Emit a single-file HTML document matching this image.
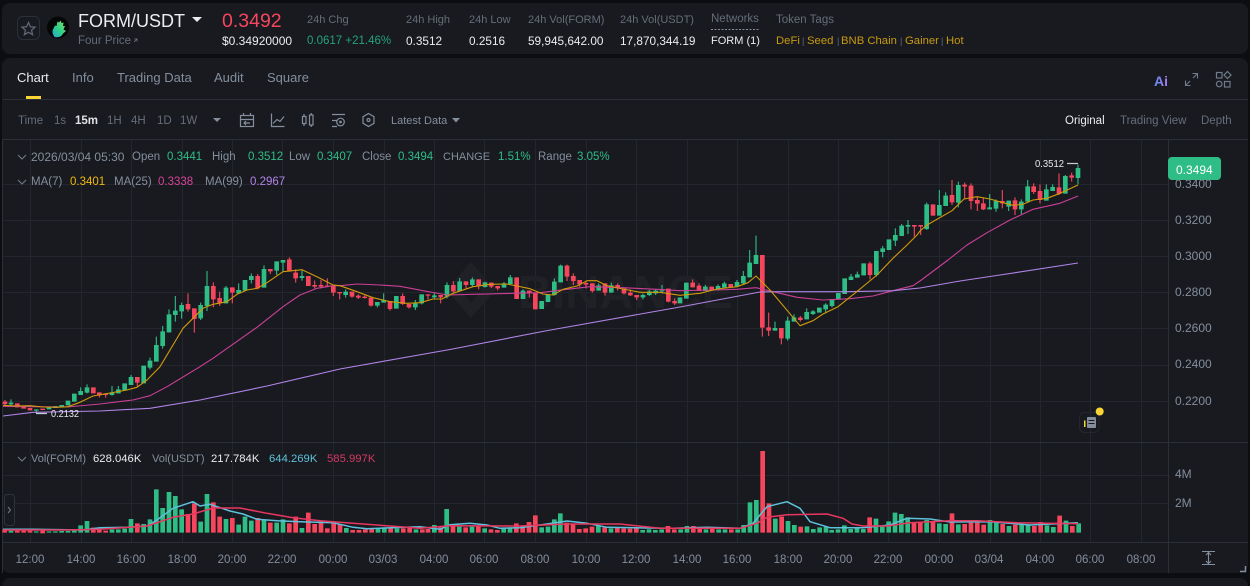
<!DOCTYPE html>
<html><head><meta charset="utf-8"><title>FORM/USDT</title>
<style>
html,body{margin:0;padding:0;background:#0c0d10;width:1250px;height:586px;overflow:hidden}
body{position:relative;font-family:"Liberation Sans",sans-serif}
.p{position:absolute;background:#181a20;border-radius:8px}
.t{position:absolute;white-space:nowrap;line-height:14px;font-size:11.5px;color:#707a8a}
.w{color:#eaecef}.g{color:#848e9c}.gr{color:#2ebd85}.gd{color:#c99a0e}.d{color:#656d7a}
.v{font-size:11.8px}.ax{color:#848e9c}.pr{font-size:12px}
.c{transform:translateX(-50%)}
svg{position:absolute;left:0;top:0}
</style></head><body>
<div class="p" style="left:2px;top:3px;width:1246px;height:51px"></div>
<div class="p" style="left:2px;top:58px;width:1246px;height:515px"></div>
<div class="p" style="left:2px;top:578px;width:1246px;height:20px"></div>

<svg width="1250" height="586" viewBox="0 0 1250 586" fill="none">
<!-- star -->
<rect x="17.500" y="16.500" width="22" height="23" rx="5" stroke="#2b3139"/>
<path d="M28.500 22.500l1.900 4.300 4.600.4-3.500 3 1.100 4.500-4.100-2.400-4.100 2.400 1.100-4.500-3.500-3 4.600-.4z" stroke="#5e6673" stroke-width="1.300"/>
<!-- logo -->
<circle cx="58" cy="27.500" r="11" fill="#050606"/>
<defs><linearGradient id="lg" x1="1" y1="0" x2="0" y2="1"><stop offset="0" stop-color="#8be05f"/><stop offset=".55" stop-color="#2dcf8a"/><stop offset="1" stop-color="#25a9d0"/></linearGradient><linearGradient id="ai" x1="0" y1="0" x2="1" y2="0"><stop offset="0" stop-color="#5f8df0"/><stop offset="1" stop-color="#a77cf0"/></linearGradient></defs>
<path d="M54.500 37C52.500 34 52 31.500 53 29.500L55 25.500L56.500 26L57.500 21.500L59 22.500L60.500 20.500L61.500 23L63.500 22.500L63 26L65 26L63.500 29.500L66 31L63 33.500C62 36 59 38 54.500 37Z" fill="url(#lg)"/>
<path d="M202 17h-10l5 5z" fill="#eaecef"/>
<!-- separators -->
<path d="M2 99.500H1248M2 139.500H1248M2 442.500H1248M2 542.500H1248" stroke="#2b2f36"/>
<path d="M1168.500 140V573" stroke="#2b2f36"/>
<path d="M2.500 140V573" stroke="#2b2f36"/>
<rect x="26" y="96" width="15" height="3" fill="#fcd535"/>
<path d="M711 29.500H760" stroke="#848e9c" stroke-dasharray="2 1.500"/>
<path d="M134 42l3-3M134.500 39H137V41.500" stroke="#707a8a" stroke-width=".8"/>
<!-- toolbar icons -->
<g stroke="#848e9c" stroke-width="1.200">
<path d="M213 118h8l-4 4z" fill="#848e9c" stroke="none"/>
<rect x="240.500" y="115.500" width="13" height="11"/><path d="M240.500 119.500h13M243.500 113v3M250.500 113v3M250 123h-5.500M246 121l-2 2 2 2"/>
<path d="M271.500 113.500v13h13M273 123.500l4-4 3 2 4-5"/>
<rect x="302.500" y="116.500" width="3.500" height="7"/><path d="M304 114v2.500M304 123.500v2.500"/><rect x="309.500" y="115" width="3.500" height="10"/><path d="M311.200 113v2M311.200 125v2"/>
<path d="M332 114.500h13M332 120.500h5M332 126.500h5"/><circle cx="340.500" cy="122" r="3.800"/><circle cx="340.500" cy="122" r=".8"/>
<path d="M368.500 113.500l5.500 3.200v6.600l-5.500 3.200-5.500-3.200v-6.600z"/><circle cx="368.500" cy="120" r="1.500"/>
</g>
<path d="M452 118h8l-4 4.500z" fill="#848e9c"/>
<!-- Ai, expand, grid -->
<text x="1154" y="86" font-family="Liberation Sans" font-weight="700" font-size="14" fill="url(#ai)">Ai</text>
<g stroke="#707a8a" stroke-width="1.200">
<path d="M1185.500 85.500l4.500-4.500M1193 78l4.500-4.500M1192.500 73.500h5v5M1185.500 80.500v5h5" stroke-width="1.100"/>
<rect x="1216.500" y="72.500" width="5.500" height="5.500"/><path d="M1227.500 71.500l3.500 3.500-3.500 3.500-3.500-3.500z"/><circle cx="1219.200" cy="84" r="2.800"/><rect x="1224.500" y="81.500" width="5.500" height="5.500"/>
</g>
<!-- grid -->
<path stroke="#23262d" d="M30.500 140V442M81.500 140V442M131.500 140V442M182.500 140V442M232.500 140V442M282.500 140V442M333.500 140V442M384.500 140V442M434.500 140V442M484.500 140V442M535.500 140V442M586.500 140V442M636.500 140V442M687.500 140V442M737.500 140V442M788.500 140V442M838.500 140V442M888.500 140V442M939.500 140V442M990.500 140V442M1040.500 140V442M1090.500 140V442M1141.500 140V442M30.500 443V542M81.500 443V542M131.500 443V542M182.500 443V542M232.500 443V542M282.500 443V542M333.500 443V542M384.500 443V542M434.500 443V542M484.500 443V542M535.500 443V542M586.500 443V542M636.500 443V542M687.500 443V542M737.500 443V542M788.500 443V542M838.500 443V542M888.500 443V542M939.500 443V542M990.500 443V542M1040.500 443V542M1090.500 443V542M1141.500 443V542M3 184.500H1168M3 220.500H1168M3 256.500H1168M3 292.500H1168M3 328.500H1168M3 365.500H1168M3 401.500H1168M3 475.500H1168M3 503.500H1168"/>
<!-- watermark -->
<path d="M471 262l24.500 28-24.500 28-24.500-28z M471 277l-11 13 11 13 11-13z" fill="#1f2127" fill-rule="evenodd"/>
<text x="518" y="308" font-family="Liberation Sans" font-weight="700" font-size="46" fill="#1f2127" textLength="215" lengthAdjust="spacingAndGlyphs">BINANCE</text>

<!-- candles A -->
<g transform="translate(0,250) scale(.33333)">
<path stroke="#f6465d" stroke-width="3.300" d="M15 450V465M298 427V442M317 430V443M412 381V410M564 130V185M583 175V248M640 97V172M659 125V168M697 112V160M773 72V118M811 57V72M868 22V65M887 58V98M944 92V115M963 90V115M982 85V110M1000 108V138M1019 126V148"/>
<path stroke="#2ebd85" stroke-width="3.300" d="M33 448V467M109 478V490M242 412V435M261 403V430M336 408V437M355 408V430M393 375V405M450 323V358M469 260V335M488 228V296M507 178V247M526 138V215M545 158V206M602 158V210M621 63V183M678 108V160M716 100V130M754 70V100M792 46V113M830 34V75M849 30V65M906 62V92"/>
<path stroke="#f6465d" stroke-width="14" d="M15 455V462M52 460V472M71 470V476M90 474V481M128 476V480M280 412V430M298 427V436M317 430V435M412 381V398M564 162V178M583 175V207M640 108V148M659 144V160M697 112V128M773 78V115M811 57V64M868 28V62M887 68V85M925 78V108M944 105V110M963 105V110M982 107V110M1000 108V128M1019 126V130"/>
<path stroke="#2ebd85" stroke-width="14" d="M33 458V463M109 478V482M147 470V478M166 468V474M185 465V472M204 452V466M223 431V455M242 423V435M261 412V428M336 427V435M355 418V430M374 400V421M393 381V405M431 347V400M450 332V353M469 285V335M488 244V288M507 193V247M526 182V195M545 165V184M602 165V205M621 108V168M678 113V160M716 120V130M735 90V122M754 78V90M792 57V113M830 34V62M849 30V38M906 78V84"/>
</g>
<!-- candles B -->
<g transform="translate(340,250) scale(.33333)">
<path stroke="#f6465d" stroke-width="3.300" d="M36 125V143M55 133V147M74 136V146M93 143V170M150 153V182M188 130V165M207 162V176M264 133V148M302 135V160M340 93V128M378 94V115M416 88V118M454 98V114M473 108V121M568 122V143M681 44V93M700 70V105M719 90V110M738 92V115M757 100V128M795 100V137M833 100V122M852 115V133M871 118V138M890 135V150M985 116V157M1004 145V165"/>
<path stroke="#2ebd85" stroke-width="3.300" d="M17 118V143M112 156V172M131 130V158M226 150V180M245 133V163M283 128V148M321 97V145M359 84V125M397 82V110M435 95V113M492 96V113M511 75V102M549 118V147M643 85V137M662 44V97M776 100V122M814 98V128M909 130V148M928 120V138M947 118V135M966 105V130"/>
<path stroke="#f6465d" stroke-width="14" d="M36 125V140M55 137V143M74 140V144M93 143V167M150 153V177M188 138V162M207 162V172M264 133V137M302 135V142M340 105V124M378 94V105M416 88V108M454 98V110M473 108V115M530 82V147M568 122V130M586 128V178M681 47V80M700 78V93M719 90V103M738 99V104M757 100V123M795 100V128M833 105V115M852 115V130M871 128V136M890 135V142M985 116V155M1004 153V160"/>
<path stroke="#2ebd85" stroke-width="14" d="M17 125V135M112 156V167M131 150V158M169 138V176M226 160V172M245 133V160M283 136V142M321 105V140M359 94V123M397 88V105M435 97V111M492 100V113M511 82V102M549 122V147M605 153V177M624 133V156M643 95V135M662 47V97M776 106V122M814 106V128M909 135V142M928 124V135M947 122V130M966 121V124"/>
</g>
<!-- candles C -->
<g transform="translate(680,220) scale(.33333)">
<path stroke="#f6465d" stroke-width="3.300" d="M38 178V202M57 190V213M95 200V212M152 192V203M247 105V350M266 278V348M304 324V373M361 288V305M570 125V178M703 15V50M722 15V45"/>
<path stroke="#2ebd85" stroke-width="3.300" d="M76 195V213M114 193V212M133 185V203M171 180V200M190 153V193M209 90V172M228 47V132M285 305V332M323 290V362M342 283V305M380 265V298M399 270V285M437 250V280M456 237V262M513 162V180M532 155V173M589 93V170M608 78V112M646 25V78M665 12V48M684 0V42"/>
<path stroke="#f6465d" stroke-width="14" d="M38 188V202M57 197V213M95 200V212M152 192V203M247 105V323M266 322V332M304 324V355M361 293V300M570 130V165M703 15V20M722 15V20"/>
<path stroke="#2ebd85" stroke-width="14" d="M0 232V250M19 188V236M76 200V213M114 198V208M133 190V203M171 186V200M190 168V190M209 128V172M228 105V132M285 324V332M323 302V356M342 292V305M380 276V298M399 274V282M418 263V278M437 254V268M456 237V258M475 219V238M494 175V222M513 170V180M532 163V173M551 130V166M589 93V165M608 85V96M627 58V90M646 45V62M665 17V48M684 15V20"/>
</g>
<!-- candles D -->
<g transform="translate(900,150) scale(.33333)">
<path stroke="#f6465d" stroke-width="3.300" d="M99 163V197M156 90V165M194 98V148M213 100V178M232 140V183M250 142V180M307 120V175M345 142V195M401 100V132M420 103V160M477 70V135M515 68V95"/>
<path stroke="#2ebd85" stroke-width="3.300" d="M80 158V240M118 120V197M137 127V168M175 95V172M269 132V178M288 148V185M326 152V183M364 148V192M383 90V158M439 103V152M458 103V123M496 75V131M534 44V103"/>
<path stroke="#f6465d" stroke-width="14" d="M99 163V197M156 135V157M194 104V110M213 107V153M232 150V161M250 160V178M307 153V160M345 151V178M401 109V126M420 123V150M477 112V132M515 76V83"/>
<path stroke="#2ebd85" stroke-width="14" d="M80 163V237M118 165V197M137 137V168M175 105V158M269 172V178M288 153V176M326 152V170M364 155V178M383 109V155M439 118V152M458 111V123M496 78V131M534 54V84"/>
</g>
<!-- MA lines -->
<g stroke-width="1.100" stroke-linejoin="round">
<path stroke="#cc3f98" d="M3 406.300L33 406.700L67 407L100 404L133 400L150 395.700L167 386.700L200 366.700L213 358.300L257 327.300L283 306.700L300 295L317 288.300L333 285.700L340 285.700L357 284L380 285L400 286.300L423 290.700L447 295L473 294.300L513 293.300L540 292.700L567 289.300L590 286.700L623 287.700L657 289.300L680 290.700L713 290L737 289.300L756 287.700L773 291.700L797 297.300L823 300L850 298.700L873 296L893 290.700L913 285.700L920 281L948 260L967 245L987 232.700L1010 220L1023 214L1033 209.300L1060 203.300L1078 196"/>
<path stroke="#b184e8" d="M3 416L33 412.300L100 411L150 408.300L200 400L267 386L340 369L450 349.500L545 331L680 307L760 292L780 291.700L847 291.700L893 290.700L920 288L960 281L1000 275L1078 263"/>
<path stroke="#d09a0a" d="M3 405.300L17 406L30 405.700L43 407L57 407.300L68 406.700L80 402.300L93 396L110 393L127 390L137 387.300L147 380L160 366.700L173 345L183 328.300L193 318.300L203 308.300L213 304.300L227 301.700L237 294.300L247 290L257 288.300L267 282.700L283 271.700L293 270.700L302 269.700L317 276.700L333 285L340 285.700L357 291.700L373 297.700L390 301.700L407 303.300L420 302.700L433 299L442 299L453 293.300L473 286.700L490 284.300L507 284L517 286L530 288.700L543 294L553 295L563 289.300L577 286L587 280.700L597 280.700L607 285.700L623 289L640 292.300L660 292.300L680 295.300L700 293.300L717 289L737 286.700L748 282.700L756 276L770 290L800 325.700L813 320.700L823 314L838 306.700L858 290.700L877 275L893 258.300L907 245L917 235L920 231L927 225L952 210.700L964 199L977 196.700L990 199L1003 202.700L1013 205.300L1023 204.300L1033 200L1047 198.300L1060 193.300L1078 185"/>
</g>
<!-- hi/lo labels -->
<path d="M1067 163.500H1078M36 413.500H47" stroke="#c8cbd0" stroke-width="1.200"/>
<text x="1035" y="167" font-family="Liberation Sans" font-size="10" fill="#e6e8ea" textLength="29" lengthAdjust="spacingAndGlyphs">0.3512</text>
<text x="51" y="417" font-family="Liberation Sans" font-size="10" fill="#e6e8ea" textLength="28" lengthAdjust="spacingAndGlyphs">0.2132</text>
<!-- price badge -->
<rect x="1168" y="157" width="53" height="23" rx="4" fill="#2ebd85"/>
<!-- note marker -->
<rect x="1079.500" y="412.500" width="19.500" height="20" rx="5" stroke="#24272e"/>
<rect x="1087" y="417" width="9" height="11" rx="1" fill="#848e9c"/><path d="M1088.500 420.500h6M1088.500 423.500h6" stroke="#181a20"/><rect x="1084" y="420.500" width="1.500" height="6.500" fill="#fcd535"/>
<circle cx="1099.700" cy="411.500" r="4" fill="#fcd535"/>
<!-- chevrons -->
<path d="M18 155l4 4 4-4M18 180l4 4 4-4M18 457l4 4 4-4" stroke="#707a8a" stroke-width="1.100"/>
<!-- collapse button -->
<rect x="4.500" y="494.500" width="10" height="31" rx="3" fill="#181a20" stroke="#2f333b"/>
<path d="M8 507l2.500 3-2.500 3" stroke="#707a8a"/>
<!-- volumes -->
<g transform="translate(0,440) scale(.33333)" stroke-width="14">
<path stroke="#f6465d" d="M14 268V278M52 272V278M71 272V278M90 272V278M128 270V280M280 263V278M298 270V278M317 272V278M412 250V278M564 222V278M583 190V278M640 187V278M659 230V278M697 234V278M773 234V278M811 248V278M868 250V278M887 230V278M925 218V278M944 252V278M963 245V278M982 265V278M1001 246V278M1020 253V278M1058 270V278M1077 270V278M1096 268V278M1115 265V278M1172 264V278M1210 265V278M1229 264V278"/>
<path stroke="#2ebd85" d="M33 272V278M109 274V278M147 274V278M166 274V278M185 273V278M204 273V278M223 272V278M242 256V278M261 243V278M336 268V278M355 268V278M374 266V278M393 237V278M431 252V278M450 238V278M469 148V278M488 204V278M507 156V278M526 168V278M545 208V278M602 245V278M621 162V278M678 237V278M716 254V278M735 230V278M754 242V278M792 240V278M830 248V278M849 238V278M906 264V278M1039 264V278M1134 266V278M1153 265V278M1191 265V278M1248 268V278"/>
</g>
<g transform="translate(420,440) scale(.33333)" stroke-width="14">
<path stroke="#f6465d" d="M7 268V278M24 267V278M62 262V278M99 258V278M137 262V278M175 258V278M213 268V278M232 270V278M289 250V278M308 258V278M327 246V278M346 226V278M440 248V278M459 252V278M478 267V278M497 265V278M516 260V278M554 262V278M592 262V278M611 265V278M630 266V278M649 265V278M744 258V278M763 268V278M820 258V278M839 265V278M877 266V278M934 268V278M1028 33V278M1047 190V278M1085 230V278M1142 260V278"/>
<path stroke="#2ebd85" d="M43 255V278M80 207V278M118 260V278M156 260V278M194 265V278M251 266V278M270 265V278M365 262V278M384 260V278M403 238V278M421 220V278M535 258V278M573 265V278M668 270V278M687 268V278M706 270V278M725 268V278M782 268V278M801 258V278M858 268V278M896 268V278M915 268V278M953 268V278M971 255V278M990 187V278M1009 180V278M1066 236V278M1104 243V278M1123 255V278M1161 259V278M1180 267V278M1199 262V278M1218 260V278"/>
</g>
<g transform="translate(830,400) scale(.33333)" stroke-width="14">
<path stroke="#f6465d" d="M119 352V398M252 368V398M271 365V398M309 365V398M366 340V398M404 372V398M423 368V398M442 368V398M461 374V398M518 372V398M556 374V398M613 378V398M632 366V398M689 347V398M727 378V398"/>
<path stroke="#2ebd85" d="M5 390V398M24 388V398M43 376V398M62 387V398M81 385V398M100 387V398M138 356V398M157 380V398M176 364V398M195 338V398M214 342V398M233 352V398M290 360V398M328 370V398M347 372V398M385 373V398M480 360V398M499 368V398M537 378V398M575 374V398M594 373V398M651 376V398M670 381V398M708 362V398M746 370V398"/>
</g>
<!-- vol MAs -->
<g stroke-width="1.500" stroke-linejoin="round">
<path stroke="#5ec2dc" d="M3 529.300L33 529.300L83 530L100 527.700L127 527.300L147 526L157 520L173 508.300L193 501.700L200 506L210 504.300L230 511L243 514L257 519.300L277 520.700L300 521.700L333 522.700L353 527.300L367 528.700L420 526.700L440 529.300L450 524.700L470 523.300L487 525L500 528.300L520 527.700L547 524L567 521L587 523.300L607 527.300L647 528L673 528.300L707 527.300L740 528.300L753 523.300L767 506.700L787 501.700L800 508.300L810 521.700L830 527.700L863 527.700L890 525L907 518.300L930 519L950 522L990 521.700L1030 525L1078 522.700"/>
<path stroke="#e8375f" d="M3 530L67 530L100 529.300L147 526L160 521.700L173 517.300L193 514L213 508L240 508L267 513.300L293 517.700L320 520.700L353 523.300L400 526.700L420 528.300L450 525.700L520 526L567 524L620 524L660 528.300L740 528.300L757 523.300L767 517.300L787 514.700L827 514L843 518.300L852 524L863 526L887 526L910 522.700L950 520.700L977 520.700L1017 522.700L1078 523.700"/>
</g>
<!-- bottom right -->
<path d="M1202 551.500h13M1202 564.500h13M1208.500 553v10M1206 555l2.500-2.500 2.500 2.500M1206 561l2.500 2.500 2.500-2.500" stroke="#848e9c" stroke-width="1.100"/>
<path d="M1240 571.500h5.500V566" stroke="#848e9c" stroke-width="1.500"/>
</svg>

<!-- header -->
<div class="t w" style="left:78px;top:14px;font-size:18px">FORM/USDT</div>
<div class="t d" style="left:78px;top:34px">Four Price</div>
<div class="t" style="left:222px;top:14px;font-size:19.500px;color:#f6465d">0.3492</div>
<div class="t w" style="left:222px;top:34px;font-size:12px">$0.34920000</div>
<div class="t d" style="left:307px;top:13px;font-size:11px">24h Chg</div>
<div class="t" style="left:307px;top:34px;color:#26a17b">0.0617 +21.46%</div>
<div class="t d" style="left:406px;top:13px;font-size:11px">24h High</div>
<div class="t w v" style="left:406px;top:34px">0.3512</div>
<div class="t d" style="left:469px;top:13px;font-size:11px">24h Low</div>
<div class="t w v" style="left:469px;top:34px">0.2516</div>
<div class="t d" style="left:528px;top:13px;font-size:11px">24h Vol(FORM)</div>
<div class="t w v" style="left:528px;top:34px">59,945,642.00</div>
<div class="t d" style="left:620px;top:13px;font-size:11px">24h Vol(USDT)</div>
<div class="t w v" style="left:620px;top:34px">17,870,344.19</div>
<div class="t d" style="left:711px;top:12px">Networks</div>
<div class="t w" style="left:711px;top:34px;font-size:11px">FORM (1)</div>
<div class="t d" style="left:776px;top:13px">Token Tags</div>
<div class="t gd" style="left:776px;top:34px;font-size:11.300px">DeFi</div>
<div class="t d" style="left:802px;top:34px;font-size:9px">|</div>
<div class="t gd" style="left:807px;top:34px;font-size:11.300px">Seed</div>
<div class="t d" style="left:837px;top:34px;font-size:9px">|</div>
<div class="t gd" style="left:841px;top:34px;font-size:11.300px">BNB Chain</div>
<div class="t d" style="left:900px;top:34px;font-size:9px">|</div>
<div class="t gd" style="left:905px;top:34px;font-size:11.300px">Gainer</div>
<div class="t d" style="left:941px;top:34px;font-size:9px">|</div>
<div class="t gd" style="left:946px;top:34px;font-size:11.300px">Hot</div>
<!-- tabs -->
<div class="t w" style="left:17px;top:71px;font-size:13px">Chart</div>
<div class="t g" style="left:72px;top:71px;font-size:13px">Info</div>
<div class="t g" style="left:117px;top:71px;font-size:13px">Trading Data</div>
<div class="t g" style="left:214px;top:71px;font-size:13px">Audit</div>
<div class="t g" style="left:267px;top:71px;font-size:13px">Square</div>
<!-- toolbar -->
<div class="t d" style="left:18px;top:114px">Time</div>
<div class="t d" style="left:54px;top:114px">1s</div>
<div class="t w" style="left:75px;top:114px;font-weight:700;color:#dfe2e6">15m</div>
<div class="t d" style="left:107px;top:114px">1H</div>
<div class="t d" style="left:131px;top:114px">4H</div>
<div class="t d" style="left:157px;top:114px">1D</div>
<div class="t d" style="left:180px;top:114px">1W</div>
<div class="t g" style="left:391px;top:114px;font-size:11px">Latest Data</div>
<div class="t w" style="left:1065px;top:114px">Original</div>
<div class="t d" style="left:1120px;top:114px">Trading View</div>
<div class="t d" style="left:1201px;top:114px">Depth</div>
<!-- legend -->
<div class="t g" style="left:31px;top:150px;font-size:12px">2026/03/04 05:30</div>
<div class="t g" style="left:132px;top:150px">Open</div><div class="t gr" style="left:167px;top:150px">0.3441</div>
<div class="t g" style="left:212px;top:150px">High</div><div class="t gr" style="left:248px;top:150px">0.3512</div>
<div class="t g" style="left:289px;top:150px">Low</div><div class="t gr" style="left:317px;top:150px">0.3407</div>
<div class="t g" style="left:362px;top:150px">Close</div><div class="t gr" style="left:398px;top:150px">0.3494</div>
<div class="t g" style="left:443px;top:150px;font-size:11px">CHANGE</div><div class="t gr" style="left:498px;top:150px">1.51%</div>
<div class="t g" style="left:538px;top:150px">Range</div><div class="t gr" style="left:577px;top:150px">3.05%</div>
<div class="t g" style="left:31px;top:175px">MA(7)</div><div class="t" style="left:70px;top:175px;color:#f0b90b">0.3401</div>
<div class="t g" style="left:114px;top:175px">MA(25)</div><div class="t" style="left:158px;top:175px;color:#d6449a">0.3338</div>
<div class="t g" style="left:205px;top:175px">MA(99)</div><div class="t" style="left:250px;top:175px;color:#b184e8">0.2967</div>
<div class="t g" style="left:31px;top:452px;font-size:11px">Vol(FORM)</div><div class="t w" style="left:93px;top:452px;font-size:11.300px">628.046K</div>
<div class="t g" style="left:152px;top:452px;font-size:11px">Vol(USDT)</div><div class="t w" style="left:211px;top:452px;font-size:11.300px">217.784K</div>
<div class="t" style="left:269px;top:452px;font-size:11.300px;color:#5ec2dc">644.269K</div>
<div class="t" style="left:327px;top:452px;font-size:11.300px;color:#d43a62">585.997K</div>
<!-- price axis -->
<div class="t ax pr" style="left:1175px;top:177px">0.3400</div>
<div class="t ax pr" style="left:1175px;top:213px">0.3200</div>
<div class="t ax pr" style="left:1175px;top:249px">0.3000</div>
<div class="t ax pr" style="left:1175px;top:285px">0.2800</div>
<div class="t ax pr" style="left:1175px;top:321px">0.2600</div>
<div class="t ax pr" style="left:1175px;top:357px">0.2400</div>
<div class="t ax pr" style="left:1175px;top:394px">0.2200</div>
<div class="t ax pr" style="left:1175px;top:467px">4M</div>
<div class="t ax pr" style="left:1175px;top:496px">2M</div>
<div class="t pr" style="left:1176px;top:163px;color:#fff">0.3494</div>
<!-- time axis -->
<div class="t ax c" style="left:30px;top:553px">12:00</div>
<div class="t ax c" style="left:81px;top:553px">14:00</div>
<div class="t ax c" style="left:131px;top:553px">16:00</div>
<div class="t ax c" style="left:182px;top:553px">18:00</div>
<div class="t ax c" style="left:232px;top:553px">20:00</div>
<div class="t ax c" style="left:282px;top:553px">22:00</div>
<div class="t ax c" style="left:333px;top:553px">00:00</div>
<div class="t ax c" style="left:383px;top:553px">03/03</div>
<div class="t ax c" style="left:434px;top:553px">04:00</div>
<div class="t ax c" style="left:484px;top:553px">06:00</div>
<div class="t ax c" style="left:535px;top:553px">08:00</div>
<div class="t ax c" style="left:586px;top:553px">10:00</div>
<div class="t ax c" style="left:636px;top:553px">12:00</div>
<div class="t ax c" style="left:687px;top:553px">14:00</div>
<div class="t ax c" style="left:737px;top:553px">16:00</div>
<div class="t ax c" style="left:788px;top:553px">18:00</div>
<div class="t ax c" style="left:838px;top:553px">20:00</div>
<div class="t ax c" style="left:888px;top:553px">22:00</div>
<div class="t ax c" style="left:939px;top:553px">00:00</div>
<div class="t ax c" style="left:989px;top:553px">03/04</div>
<div class="t ax c" style="left:1040px;top:553px">04:00</div>
<div class="t ax c" style="left:1090px;top:553px">06:00</div>
<div class="t ax c" style="left:1141px;top:553px">08:00</div>
</body></html>
